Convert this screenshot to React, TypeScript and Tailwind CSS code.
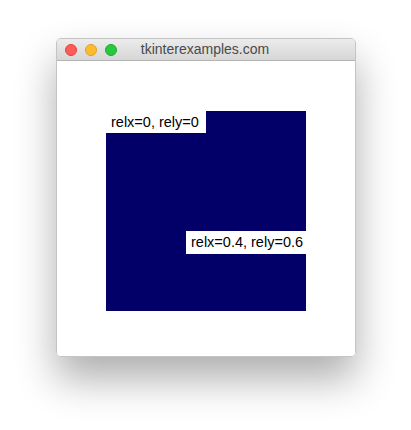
export default function App() {
  return (
    <div className="w-[411px] h-[430px] bg-white pl-[56px] pt-[38px]" style={{ fontFamily: '"Liberation Sans", Arial, sans-serif' }}>
      <div className="w-[300px] rounded-[5px] overflow-hidden border border-[#c4c4c4] shadow-[0_22px_40px_rgba(0,0,0,0.32)]">
        {/* title bar */}
        <div className="relative h-[22px] flex items-center bg-gradient-to-b from-[#ececec] to-[#d6d6d6] border-b border-[#b4b4b4]">
          <div className="flex gap-[8px] pl-[8px]">
            <span className="w-[12px] h-[12px] rounded-full bg-[#fc5b57] border border-[#e3443f]" />
            <span className="w-[12px] h-[12px] rounded-full bg-[#fdbc2e] border border-[#e1a123]" />
            <span className="w-[12px] h-[12px] rounded-full bg-[#28c840] border border-[#1eab2f]" />
          </div>
          <div className="absolute inset-0 flex items-center justify-center pr-[2px] text-[14px] text-[#4a4a4a]">
            tkinterexamples.com
          </div>
        </div>
        {/* content */}
        <div className="h-[295px] bg-white pl-[49px] pt-[50px]">
          <div className="relative w-[200px] h-[200px] bg-[#020068] overflow-hidden">
            <div className="absolute left-0 top-0 w-[100px] h-[22px] bg-white text-black text-[14.5px] leading-[22px] pl-[5px] whitespace-nowrap">
              relx=0, rely=0
            </div>
            <div className="absolute left-[80px] top-[120px] h-[23px] bg-white text-black text-[14.5px] leading-[23px] px-[5px] whitespace-nowrap">
              relx=0.4, rely=0.6
            </div>
          </div>
        </div>
      </div>
    </div>
  );
}
